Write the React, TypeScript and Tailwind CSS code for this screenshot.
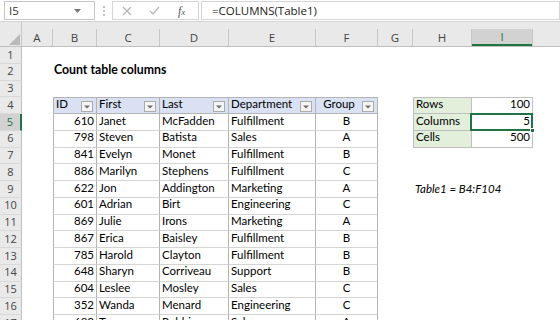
import React from 'react'

const widths = [
  'w-[22px]',
  'w-[31px]',
  'w-[44px]',
  'w-[63px]',
  'w-[69px]',
  'w-[87px]',
  'w-[62px]',
  'w-[35px]',
  'w-[59px]',
  'w-[61px]',
  'flex-1',
]

const letters = ['A', 'B', 'C', 'D', 'E', 'F', 'G', 'H', 'I', '']

const people = [
  ['610', 'Janet', 'McFadden', 'Fulfillment', 'B'],
  ['798', 'Steven', 'Batista', 'Sales', 'A'],
  ['841', 'Evelyn', 'Monet', 'Fulfillment', 'B'],
  ['886', 'Marilyn', 'Stephens', 'Fulfillment', 'C'],
  ['622', 'Jon', 'Addington', 'Marketing', 'A'],
  ['601', 'Adrian', 'Birt', 'Engineering', 'C'],
  ['869', 'Julie', 'Irons', 'Marketing', 'A'],
  ['867', 'Erica', 'Baisley', 'Fulfillment', 'B'],
  ['785', 'Harold', 'Clayton', 'Fulfillment', 'B'],
  ['648', 'Sharyn', 'Corriveau', 'Support', 'B'],
  ['604', 'Leslee', 'Mosley', 'Sales', 'C'],
  ['352', 'Wanda', 'Menard', 'Engineering', 'C'],
  ['693', 'Tom', 'Robbins', 'Sales', 'A'],
]

const font = { fontFamily: 'Lato, "Open Sans", sans-serif' }

function Dropdown() {
  return (
    <span className="ml-auto mr-[3px] mb-[1px] flex h-[11px] w-[12px] shrink-0 items-center justify-center border border-[#ababab] bg-[#f4f4f4]">
      <svg width="6" height="4" viewBox="0 0 6 4">
        <path d="M0 0.5h6L3 3.5z" fill="#6b6b6b" />
      </svg>
    </span>
  )
}

function RowHead({ n, selected }: { n: number; selected?: boolean }) {
  return (
    <div
      className={`w-[22px] shrink-0 flex items-center justify-center text-[11px] border-b border-[#d8d8d8] ${
        selected
          ? 'bg-[#d2d2d2] text-[#217346] border-r-2 border-r-[#217346]'
          : 'bg-[#e9e9e9] text-[#444] border-r border-r-[#c0c0c0]'
      }`}
      style={{ fontFamily: '"Open Sans", "Noto Sans", sans-serif' }}
    >
      {n}
    </div>
  )
}

function Row({ n, children, selected }: { n: number; children?: React.ReactNode; selected?: boolean }) {
  return (
    <div className="flex h-[16.75px] shrink-0">
      <RowHead n={n} selected={selected} />
      {children}
    </div>
  )
}

function Blank({ i }: { i: number }) {
  return <div className={`${widths[i]} shrink-0`} />
}

export default function App() {
  return (
    <div className="w-[560px] h-[320px] overflow-hidden bg-white flex flex-col text-black" style={font}>
      {/* formula bar */}
      <div className="h-[22px] shrink-0 flex items-center gap-[2px] pl-[4px] border-b border-[#d4d4d4] bg-white">
        <div className="w-[91px] h-[19px] border border-[#c6c6c6] flex items-center px-[4px] text-[11.5px] text-[#333]" style={{ fontFamily: '"Open Sans", sans-serif' }}>
          <span>I5</span>
          <svg className="ml-auto mr-[9px]" width="7" height="4" viewBox="0 0 7 4">
            <path d="M0 0h7L3.5 4z" fill="#777" />
          </svg>
        </div>
        <div className="w-[13px] flex flex-col items-center gap-[2px]">
          <span className="w-[2px] h-[2px] bg-[#c4c4c4]" />
          <span className="w-[2px] h-[2px] bg-[#c4c4c4]" />
          <span className="w-[2px] h-[2px] bg-[#c4c4c4]" />
        </div>
        <div className="w-[87px] h-[19px] border border-[#d4d4d4] flex items-center">
          <svg className="ml-[9px]" width="10" height="10" viewBox="0 0 10 10">
            <path d="M1 1l8 8M9 1l-8 8" stroke="#b5b5b5" strokeWidth="1.2" />
          </svg>
          <svg className="ml-[17px]" width="11" height="9" viewBox="0 0 11 9">
            <path d="M1 5l3 3 6-7" stroke="#b5b5b5" strokeWidth="1.2" fill="none" />
          </svg>
          <span className="ml-[18px] italic text-[12px] text-[#555]" style={{ fontFamily: '"Liberation Serif", serif' }}>
            f<span className="text-[9px]">x</span>
          </span>
        </div>
        <div className="flex-1 h-[19px] border border-[#d4d4d4] flex items-center pl-[10px] text-[11.5px] text-[#222]" style={{ fontFamily: '"Open Sans", sans-serif' }}>
          =COLUMNS(Table1)
        </div>
      </div>

      {/* column headers */}
      <div className="h-[25px] shrink-0 flex bg-[#e9e9e9] border-b border-[#bfbfbf]" style={{ fontFamily: '"Open Sans", sans-serif' }}>
        <div className="w-[22px] shrink-0 flex items-end justify-end pr-[1px] pb-[1px] border-r border-[#c6c6c6]">
          <svg width="11" height="11" viewBox="0 0 11 11">
            <path d="M11 0V11H0z" fill="#b9b9b9" />
          </svg>
        </div>
        {letters.map((l, i) => (
          <div key={i} className={`${widths[i + 1]} shrink-0 flex items-end`}>
            <div
              className={`flex-1 h-[17px] flex items-center justify-center text-[11.5px] ${
                l === 'I' ? 'bg-[#d2d2d2] text-[#217346] border-b-2 border-[#217346]' : 'text-[#444]'
              }`}
            >
              {l}
            </div>
            {l !== '' && <span className="w-px h-[17px] bg-[#c6c6c6]" />}
          </div>
        ))}
      </div>

      {/* rows */}
      <Row n={1} />
      <Row n={2}>
        <Blank i={1} />
        <div className="flex items-end pb-[1px] pl-[1px] font-bold text-[12.3px] whitespace-nowrap">Count table columns</div>
      </Row>
      <Row n={3} />
      <Row n={4}>
        <Blank i={1} />
        {['ID', 'First', 'Last', 'Department', 'Group'].map((h, i) => (
          <div
            key={h}
            className={`${widths[i + 2]} shrink-0 flex items-end pl-[2px] text-[11.5px] bg-[#d9e1f2] border-t border-b border-r border-[#b4b4b4] ${
              i === 0 ? 'border-l' : ''
            }`}
          >
            <span className={`pb-[1px] ${h === 'Group' ? 'ml-auto mr-[2px]' : ''}`}>{h}</span>
            <Dropdown />
          </div>
        ))}
        <Blank i={7} />
        <div className="w-[59px] shrink-0 flex items-end pl-[2px] pb-[1px] text-[11.5px] bg-[#e2efda] border border-[#bfbfbf]">Rows</div>
        <div className="w-[61px] shrink-0 flex items-end justify-end pr-[2px] pb-[1px] text-[11.5px] border-t border-b border-r border-[#bfbfbf]">100</div>
      </Row>
      {people.map((p, idx) => {
        const n = idx + 5
        return (
          <Row key={n} n={n} selected={n === 5}>
            <Blank i={1} />
            <div className="w-[44px] shrink-0 flex items-end justify-end pr-[2px] pb-[1px] text-[11.5px] border-l border-r border-b border-l-[#b4b4b4] border-r-[#b4b4b4] border-b-[#d4d4d4]">
              {p[0]}
            </div>
            <div className="w-[63px] shrink-0 flex items-end pl-[2px] pb-[1px] text-[11.5px] border-r border-b border-r-[#b4b4b4] border-b-[#d4d4d4]">
              {p[1]}
            </div>
            <div className="w-[69px] shrink-0 flex items-end pl-[2px] pb-[1px] text-[11.5px] border-r border-b border-r-[#b4b4b4] border-b-[#d4d4d4]">
              {p[2]}
            </div>
            <div className="w-[87px] shrink-0 flex items-end pl-[2px] pb-[1px] text-[11.5px] border-r border-b border-r-[#b4b4b4] border-b-[#d4d4d4]">
              {p[3]}
            </div>
            <div className="w-[62px] shrink-0 flex items-end justify-center pb-[1px] text-[11.5px] border-r border-b border-r-[#b4b4b4] border-b-[#d4d4d4]">
              {p[4]}
            </div>
            <Blank i={7} />
            {n === 5 && (
              <>
                <div className="w-[59px] shrink-0 flex items-end pl-[2px] pb-[1px] text-[11.5px] bg-[#e2efda] border-l border-r border-b border-[#bfbfbf]">Columns</div>
                <div className="relative w-[61px] shrink-0 flex items-end justify-end pr-[2px] pb-[1px] text-[11.5px] border-r border-b border-[#bfbfbf]">
                  5
                  <span className="absolute -left-[2px] -top-[1px] -right-[1px] -bottom-[1px] border-2 border-[#217346]" />
                  <span className="absolute -right-[3px] -bottom-[3px] w-[5px] h-[5px] bg-[#217346] border border-white" />
                </div>
              </>
            )}
            {n === 6 && (
              <>
                <div className="w-[59px] shrink-0 flex items-end pl-[2px] pb-[1px] text-[11.5px] bg-[#e2efda] border-l border-r border-b border-[#bfbfbf]">Cells</div>
                <div className="w-[61px] shrink-0 flex items-end justify-end pr-[2px] pb-[1px] text-[11.5px] border-r border-b border-[#bfbfbf]">500</div>
              </>
            )}
            {n === 9 && (
              <div className="flex items-end pl-[2px] pb-[1px] text-[11.5px] italic whitespace-nowrap">Table1 = B4:F104</div>
            )}
          </Row>
        )
      })}
    </div>
  )
}
